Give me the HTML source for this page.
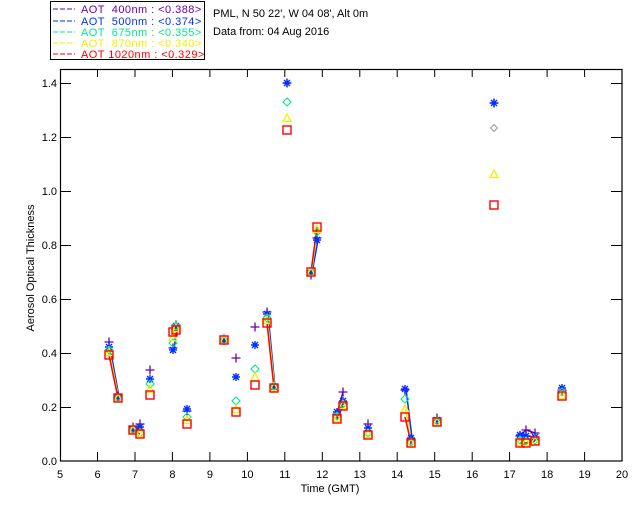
<!DOCTYPE html>
<html><head><meta charset="utf-8"><style>
html,body{margin:0;padding:0;background:#fff;}
svg{display:block;font-family:"Liberation Sans",sans-serif;}
</style></head><body>
<svg width="640" height="512" viewBox="0 0 640 512" xmlns="http://www.w3.org/2000/svg">
<defs>
<g id="p"><path d="M-4.5 0H4.5M0-4.5V4.5" stroke="#6a00b0" stroke-width="1.3" fill="none"/></g>
<g id="s"><path d="M-4 0H4M0-4V4M-3-3L3 3M-3 3L3-3" stroke="#0030ff" stroke-width="1.4" fill="none"/><rect x="-1.5" y="-1.5" width="3" height="3" fill="#0030ff"/></g>
<g id="d"><path d="M0-4L4 0L0 4L-4 0Z" stroke="#00e88c" stroke-width="1.1" fill="none"/></g>
<g id="g"><path d="M0-3.5L3.5 0L0 3.5L-3.5 0Z" stroke="#999" stroke-width="1" fill="none"/></g>
<g id="t"><path d="M0-4L4 3.5H-4Z" stroke="#f0f000" stroke-width="1.3" fill="none"/></g>
<g id="q"><rect x="-4" y="-4" width="8" height="8" stroke="#ff0000" stroke-width="1.4" fill="none"/></g>
</defs>

<!-- legend -->
<rect x="50.5" y="1.5" width="154" height="58" fill="none" stroke="#000" stroke-width="1"/>
<g font-size="11">
<g letter-spacing="0.45">
<line x1="53" y1="9" x2="75" y2="9" stroke="#6a00b0" stroke-dasharray="5,2"/>
<text x="81" y="13" fill="#6a00b0" xml:space="preserve">AOT  400nm : &lt;0.388&gt;</text>
<line x1="53" y1="21" x2="75" y2="21" stroke="#0030ff" stroke-dasharray="5,2"/>
<text x="81" y="25" fill="#0030ff" xml:space="preserve">AOT  500nm : &lt;0.374&gt;</text>
<line x1="53" y1="32" x2="75" y2="32" stroke="#00e88c" stroke-dasharray="5,2"/>
<text x="81" y="36" fill="#00e88c" xml:space="preserve">AOT  675nm : &lt;0.355&gt;</text>
<line x1="53" y1="43" x2="75" y2="43" stroke="#f0f000" stroke-dasharray="5,2"/>
<text x="81" y="47" fill="#f0f000" xml:space="preserve">AOT  870nm : &lt;0.340&gt;</text>
<line x1="53" y1="54" x2="75" y2="54" stroke="#ff0000" stroke-dasharray="5,2"/>
<text x="81" y="58" fill="#ff0000" xml:space="preserve">AOT 1020nm : &lt;0.329&gt;</text>
</g>
<text x="213" y="17" fill="#000">PML, N 50 22', W 04 08', Alt 0m</text>
<text x="213" y="35" fill="#000">Data from: 04 Aug 2016</text>
</g>

<!-- axes -->
<rect x="60.5" y="69.5" width="561.5" height="391.5" fill="none" stroke="#000" stroke-width="1.2"/>
<g stroke="#000" stroke-width="1">
<path d="M97.5 461v-9M135 461v-9M172.4 461v-9M209.9 461v-9M247.4 461v-9M284.8 461v-9M322.3 461v-9M359.8 461v-9M397.2 461v-9M434.7 461v-9M472.2 461v-9M509.6 461v-9M547.1 461v-9M584.6 461v-9"/>
<path d="M97.5 69v8M135 69v8M172.4 69v8M209.9 69v8M247.4 69v8M284.8 69v8M322.3 69v8M359.8 69v8M397.2 69v8M434.7 69v8M472.2 69v8M509.6 69v8M547.1 69v8M584.6 69v8"/>
<path d="M60 407.5h11M60 353.5h11M60 299.5h11M60 245.5h11M60 191.5h11M60 137.5h11M60 83.5h11"/>
<path d="M622 407.5h-11M622 353.5h-11M622 299.5h-11M622 245.5h-11M622 191.5h-11M622 137.5h-11M622 83.5h-11"/>
</g>
<g font-size="11" fill="#000" text-anchor="middle">
<text x="60" y="478">5</text><text x="97.5" y="478">6</text><text x="135" y="478">7</text><text x="172.4" y="478">8</text><text x="209.9" y="478">9</text><text x="247.4" y="478">10</text><text x="284.8" y="478">11</text><text x="322.3" y="478">12</text><text x="359.8" y="478">13</text><text x="397.2" y="478">14</text><text x="434.7" y="478">15</text><text x="472.2" y="478">16</text><text x="509.6" y="478">17</text><text x="547.1" y="478">18</text><text x="584.6" y="478">19</text><text x="622" y="478">20</text>
<text x="330" y="492">Time (GMT)</text>
</g>
<g font-size="11" fill="#000" text-anchor="end">
<text x="57" y="465">0.0</text><text x="57" y="411">0.2</text><text x="57" y="357">0.4</text><text x="57" y="303">0.6</text><text x="57" y="249">0.8</text><text x="57" y="195">1.0</text><text x="57" y="141">1.2</text><text x="57" y="87">1.4</text>
</g>
<text x="0" y="0" font-size="11" fill="#000" text-anchor="middle" transform="translate(34 268) rotate(-90)">Aerosol Optical Thickness</text>

<!-- connecting lines -->
<g fill="none" stroke-width="1.5">
<g stroke="#0030ff"><path d="M110 347L119 397M134 429L141 427M174 350L177 326M268 314L275 387M312 273L318 240M338 412L344 401M406 389L412 438M521 435L527 436L536 437"/></g>
<g stroke="#f0f000"><path d="M109.5 352L118.5 398M173.5 337L176.5 328M267.5 320L274.5 387M311.5 272L317.5 229M337.5 418L343.5 405M405.5 409L411.5 443"/></g>
<g stroke="#ff0000"><path d="M109 355L118 398M133 430L140 434M173 332L176 330M267 323L274 388M311 272L317 227M337 419L343 406M405 417L411 443M520 443L526 443L535 441"/></g>
<g stroke="#6a00b0"><path d="M337 414L343 392M520 436L526 430L535 433"/></g>
</g>

<!-- data markers -->
<g>
<use href="#p" x="109" y="342"/><use href="#s" x="109" y="347"/><use href="#d" x="109" y="350"/><use href="#t" x="109" y="352"/><use href="#q" x="109" y="355"/>
<use href="#p" x="118" y="396"/><use href="#s" x="118" y="397"/><use href="#d" x="118" y="398"/><use href="#t" x="118" y="398"/><use href="#q" x="118" y="398"/>
<use href="#p" x="133" y="427"/><use href="#s" x="133" y="429"/><use href="#d" x="133" y="430"/><use href="#t" x="133" y="430"/><use href="#q" x="133" y="430"/>
<use href="#p" x="140" y="424"/><use href="#s" x="140" y="427"/><use href="#d" x="140" y="433"/><use href="#t" x="140" y="433"/><use href="#q" x="140" y="434"/>
<use href="#p" x="150" y="370"/><use href="#s" x="150" y="379"/><use href="#d" x="150" y="384"/><use href="#t" x="150" y="389"/><use href="#q" x="150" y="395"/>
<use href="#p" x="173" y="348"/><use href="#s" x="173" y="350"/><use href="#d" x="173" y="343"/><use href="#t" x="173" y="337"/><use href="#q" x="173" y="332"/>
<use href="#p" x="176" y="325"/><use href="#s" x="176" y="326"/><use href="#d" x="176" y="326"/><use href="#t" x="176" y="328"/><use href="#q" x="176" y="330"/>
<use href="#p" x="187" y="411"/><use href="#s" x="187" y="409"/><use href="#d" x="187" y="417"/><use href="#t" x="187" y="420"/><use href="#q" x="187" y="424"/>
<use href="#p" x="224" y="339"/><use href="#s" x="224" y="341"/><use href="#d" x="224" y="340"/><use href="#t" x="224" y="340"/><use href="#q" x="224" y="340"/>
<use href="#p" x="236" y="358"/><use href="#s" x="236" y="377"/><use href="#d" x="236" y="401"/><use href="#t" x="236" y="409"/><use href="#q" x="236" y="412"/>
<use href="#p" x="255" y="327"/><use href="#s" x="255" y="345"/><use href="#d" x="255" y="369"/><use href="#t" x="255" y="377"/><use href="#q" x="255" y="385"/>
<use href="#p" x="267" y="312"/><use href="#s" x="267" y="314"/><use href="#d" x="267" y="318"/><use href="#t" x="267" y="320"/><use href="#q" x="267" y="323"/>
<use href="#p" x="274" y="388"/><use href="#s" x="274" y="387"/><use href="#d" x="274" y="386"/><use href="#t" x="274" y="387"/><use href="#q" x="274" y="388"/>
<use href="#p" x="287" y="83"/><use href="#s" x="287" y="83"/><use href="#d" x="287" y="102"/><use href="#t" x="287" y="118"/><use href="#q" x="287" y="130"/>
<use href="#p" x="311" y="275"/><use href="#s" x="311" y="273"/><use href="#d" x="311" y="272"/><use href="#t" x="311" y="272"/><use href="#q" x="311" y="272"/>
<use href="#p" x="317" y="238"/><use href="#s" x="317" y="240"/><use href="#d" x="317" y="232"/><use href="#t" x="317" y="229"/><use href="#q" x="317" y="227"/>
<use href="#p" x="337" y="414"/><use href="#s" x="337" y="412"/><use href="#d" x="337" y="416"/><use href="#t" x="337" y="418"/><use href="#q" x="337" y="419"/>
<use href="#p" x="343" y="392"/><use href="#s" x="343" y="401"/><use href="#d" x="343" y="404"/><use href="#t" x="343" y="405"/><use href="#q" x="343" y="406"/>
<use href="#p" x="368" y="424"/><use href="#s" x="368" y="428"/><use href="#d" x="368" y="433"/><use href="#t" x="368" y="434"/><use href="#q" x="368" y="435"/>
<use href="#p" x="405" y="390"/><use href="#s" x="405" y="389"/><use href="#d" x="405" y="399"/><use href="#t" x="405" y="409"/><use href="#q" x="405" y="417"/>
<use href="#p" x="411" y="440"/><use href="#s" x="411" y="438"/><use href="#d" x="411" y="442"/><use href="#t" x="411" y="443"/><use href="#q" x="411" y="443"/>
<use href="#p" x="437" y="418"/><use href="#s" x="437" y="420"/><use href="#d" x="437" y="421"/><use href="#t" x="437" y="422"/><use href="#q" x="437" y="422"/>
<use href="#p" x="494" y="103"/><use href="#s" x="494" y="103"/><use href="#g" x="494" y="128"/><use href="#t" x="494" y="174"/><use href="#q" x="494" y="205"/>
<use href="#p" x="520" y="436"/><use href="#s" x="520" y="435"/><use href="#d" x="520" y="440"/><use href="#t" x="520" y="442"/><use href="#q" x="520" y="443"/>
<use href="#p" x="526" y="430"/><use href="#s" x="526" y="436"/><use href="#d" x="526" y="441"/><use href="#t" x="526" y="442"/><use href="#q" x="526" y="443"/>
<use href="#p" x="535" y="433"/><use href="#s" x="535" y="437"/><use href="#d" x="535" y="440"/><use href="#t" x="535" y="441"/><use href="#q" x="535" y="441"/>
<use href="#p" x="562" y="390"/><use href="#s" x="562" y="388"/><use href="#d" x="562" y="392"/><use href="#t" x="562" y="395"/><use href="#q" x="562" y="396"/>
</g>
</svg>
</body></html>
